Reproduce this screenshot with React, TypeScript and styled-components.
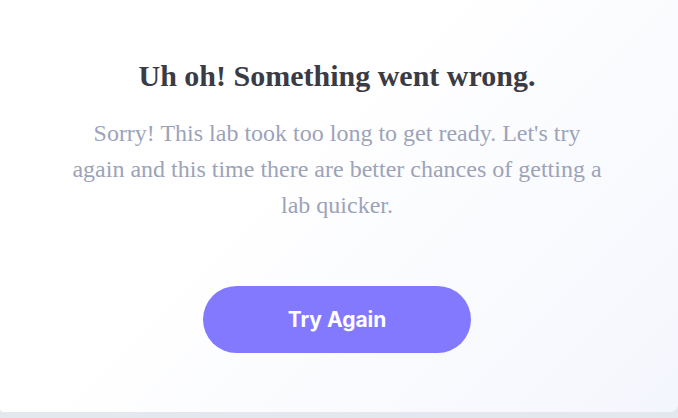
import React from "react";
import styled, { createGlobalStyle } from "styled-components";

const Global = createGlobalStyle`
  html, body { margin: 0; padding: 0; }
  body { background: #e3e7ee; width: 678px; height: 418px; overflow: hidden; }
`;

const Card = styled.div`
  box-sizing: border-box;
  width: 678px;
  height: 412px;
  background: linear-gradient(135deg, #ffffff 40%, #f4f6fd 100%);
  border-radius: 0 0 8px 4px;
  display: flex;
  flex-direction: column;
  align-items: center;
  padding: 58px 4px 0 0;
`;

const Title = styled.h1`
  margin: 0;
  font-family: "Liberation Serif", "Times New Roman", serif;
  font-weight: 700;
  font-size: 30px;
  line-height: 36px;
  color: #3a3b45;
`;

const Message = styled.p`
  margin: 21px 0 0;
  width: 533px;
  text-align: center;
  font-family: "Liberation Serif", "Times New Roman", serif;
  font-size: 24px;
  line-height: 36px;
  color: #9ca3b9;
`;

const Button = styled.button`
  margin-top: 63px;
  width: 268px;
  height: 67px;
  border: none;
  border-radius: 34px;
  background: #8379ff;
  color: #ffffff;
  font-family: Inter, "Liberation Sans", sans-serif;
  font-weight: 700;
  font-size: 21px;
  cursor: pointer;
`;

export default function App() {
  return (
    <>
      <Global />
      <Card>
        <Title>Uh oh! Something went wrong.</Title>
        <Message>
          Sorry! This lab took too long to get ready. Let's try again and this
          time there are better chances of getting a lab quicker.
        </Message>
        <Button>Try Again</Button>
      </Card>
    </>
  );
}
